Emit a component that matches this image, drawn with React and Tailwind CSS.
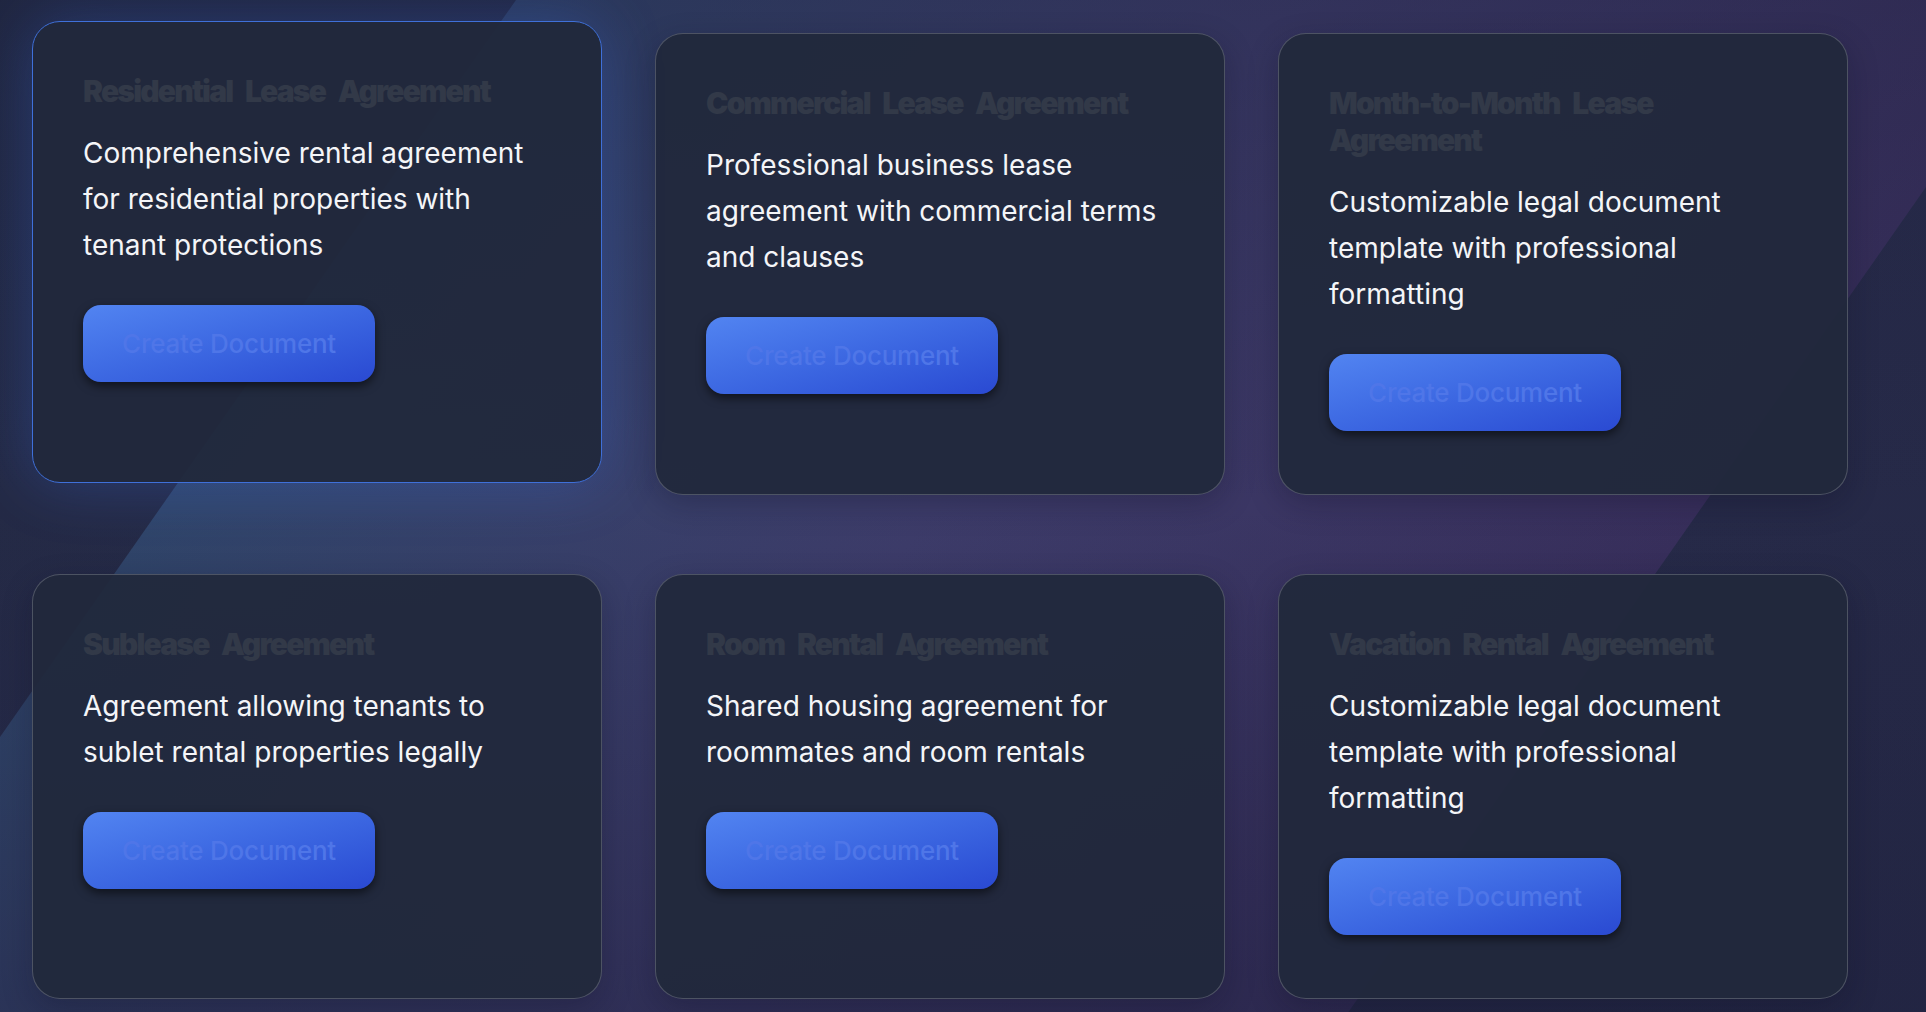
import React from 'react';

const TEMPLATES = [
  {
    title: 'Residential Lease Agreement',
    description: 'Comprehensive rental agreement for residential properties with tenant protections',
    active: true,
  },
  {
    title: 'Commercial Lease Agreement',
    description: 'Professional business lease agreement with commercial terms and clauses',
  },
  {
    title: 'Month-to-Month Lease Agreement',
    description: 'Customizable legal document template with professional formatting',
  },
  {
    title: 'Sublease Agreement',
    description: 'Agreement allowing tenants to sublet rental properties legally',
  },
  {
    title: 'Room Rental Agreement',
    description: 'Shared housing agreement for roommates and room rentals',
  },
  {
    title: 'Vacation Rental Agreement',
    description: 'Customizable legal document template with professional formatting',
  },
];

const TemplateCard = ({ title, description, active }) => {
  const frame = active
    ? 'border-[#3f70d9] -translate-y-3 shadow-[0_0_60px_rgba(59,110,230,0.3)]'
    : 'border-white/20 shadow-[0_10px_30px_rgba(10,12,30,0.25)]';

  return (
    <div className={`flex flex-col items-start rounded-[28px] border bg-[rgba(33,40,60,0.94)] px-[50px] pt-[51px] pb-[63px] ${frame}`}>
      <h3 className="text-[30px] leading-[37px] font-black tracking-[-0.06em] [word-spacing:0.28em] text-[#323948] mb-5">
        {title}
      </h3>
      <p className="text-[28px] leading-[46px] text-[#f4f5f8]">
        {description}
      </p>
      <button className="mt-[37px] h-[77px] w-[292px] rounded-[18px] bg-gradient-to-br from-[#5284f1] to-[#2a49d2] text-[26px] font-medium tracking-[-0.01em] text-[#4f76e8] shadow-[0_4px_10px_rgba(0,0,0,0.55)]">
        Create Document
      </button>
    </div>
  );
};

export default function App() {
  return (
    <div className="relative h-[1012px] w-full overflow-hidden bg-gradient-to-br from-[#212941] via-[#272b4a] to-[#252845] font-['Inter','Liberation_Sans',sans-serif]">
      {/* diagonal light band behind the cards */}
      <div className="pointer-events-none absolute inset-0">
        <div className="absolute left-[516px] top-0 h-[1012px] w-[1541px] origin-top-left skew-x-[-35deg] bg-gradient-to-r from-[#30456a] via-[#3d3c6a] to-[#382f5c]" />
        <div className="absolute inset-0 bg-gradient-to-b from-[#1f2140]/35 via-transparent to-[#1f2140]/45" />
      </div>

      <div className="relative grid grid-cols-[570px_570px_570px] gap-x-[53px] gap-y-[79px] pl-8 pt-[33px]">
        {TEMPLATES.map(t => (
          <TemplateCard key={t.title} {...t} />
        ))}
      </div>
    </div>
  );
}
